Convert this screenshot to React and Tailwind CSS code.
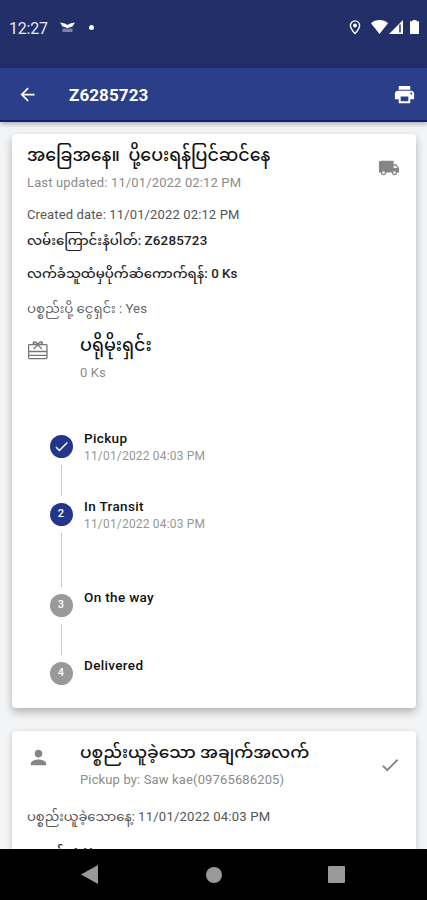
import { MdArrowBack, MdCheck, MdLocalShipping, MdPerson, MdPrint } from "react-icons/md";

const steps = [
  { id: 1, title: "Pickup", date: "11/01/2022 04:03 PM", active: true, done: true, line: "h-[31px]" },
  { id: 2, title: "In Transit", date: "11/01/2022 04:03 PM", active: true, line: "h-[54px]" },
  { id: 3, title: "On the way", line: "h-[31px]" },
  { id: 4, title: "Delivered" },
];

const StatusBar = () => {
  return (
    <div className="h-[68px] bg-[#222f69] text-[#e6e8f2] flex items-start pt-4 pl-[9px] pr-[8px]">
      <span className="text-base leading-6 tracking-[-0.2px] w-[51px] mt-px whitespace-nowrap">12:27</span>
      <svg className="w-[15px] h-[11px] mt-[6px]" viewBox="0 0 15 11">
        <path d="M0 .5 5 1.500 7.500 3 10 1.500 15 .5 12.500 4.500 9 5.500 7.500 6.500 6 5.500 2.500 4.500Z" fill="#fff" />
        <path d="M2.500 6.500h3L7.500 7.500 9.500 6.500h3v3.500h-10z" fill="#7d84a6" />
      </svg>
      <span className="w-[5px] h-[5px] rounded-full bg-white ml-[14px] mt-[9px]"></span>
      <svg className="w-[12px] h-[15px] ml-auto mt-[4px]" viewBox="0 0 12 15">
        <path
          d="M6 .9a4.600 4.600 0 0 0-4.600 4.600C1.400 8.700 6 13.600 6 13.600s4.600-4.900 4.600-8.100A4.600 4.600 0 0 0 6 .9Z"
          fill="none"
          stroke="#fff"
          strokeWidth="1.400"
        />
        <circle cx="6" cy="5.500" r="1.900" fill="#fff" />
      </svg>
      <svg className="w-[17px] h-[14px] ml-[10px] mt-[4px]" viewBox="0 0 17 14">
        <path d="M0 3.200C4.500-1 12.500-1 17 3.200L8.500 14Z" fill="#fff" />
      </svg>
      <svg className="w-[14px] h-[14px] ml-px mt-[4px]" viewBox="0 0 14 14">
        <path d="M14 0v14H0Z" fill="#fff" />
        <path d="M11 4.500v8" stroke="#222f69" strokeWidth="1.500" />
      </svg>
      <svg className="w-[9px] h-[14px] ml-[7px] mt-[4px]" viewBox="0 0 9 14">
        <path d="M2.500 0h4v1.300H9V14H0V1.300h2.500Z" fill="#fff" />
      </svg>
    </div>
  );
};

const Header = () => {
  return (
    <div className="relative h-[54px] bg-[#2b3e8a] border-b-2 border-[#0f2478] text-white flex items-center pl-[17px] pr-[12px] shadow-[0_2px_5px_rgba(0,0,0,0.3)]">
      <MdArrowBack className="w-[21px] h-[21px] mt-px" />
      <h1 className="ml-[31px] mt-[3px] text-[17px] font-bold tracking-[0.1px]">Z6285723</h1>
      <MdPrint className="w-[23px] h-[23px] ml-auto -mr-px mt-px" />
    </div>
  );
};

const GiftIcon = () => {
  return (
    <svg
      className="w-[22px] h-[22px] text-[#777] mt-[7px]"
      viewBox="0 0 22 22"
      fill="none"
      stroke="currentColor"
      strokeWidth="1.3"
    >
      <rect x="1.6" y="5.600" width="18.400" height="14" rx="0.8" />
      <path d="M1.600 12.500H20M1.600 16.300H20" />
      <path d="M10.800 5.600C9.500 3 7.500 2.200 6.500 3.200S7 5.600 10.800 5.600C14.600 5.600 16.100 4.200 15.100 3.200S12.100 3 10.800 5.600ZM10.800 5.600 6.800 10M10.800 5.600l4 4.400" />
    </svg>
  );
};

const Step = ({ step }) => {
  return (
    <div className="flex">
      <div className="w-[22px] flex flex-col items-center">
        <div
          className={`w-[23px] h-[23px] rounded-full text-white text-[11px] font-medium flex items-center justify-center ${
            step.active ? "bg-[#23368b]" : "bg-[#999999]"
          }`}
        >
          {step.done ? <MdCheck className="w-[17px] h-[17px]" /> : step.id}
        </div>
        {step.line && <div className={`w-px bg-[#c9c9c9] my-[7px] ${step.line}`}></div>}
      </div>
      <div className="ml-3 -mt-[6px]">
        <p className="text-[13.5px] leading-[18px] font-medium text-[#111] tracking-[0.35px]">{step.title}</p>
        {step.date && (
          <p className="text-xs leading-[19px] text-[#969696] tracking-[0.18px]">{step.date}</p>
        )}
      </div>
    </div>
  );
};

const App = () => {
  return (
    <div className="h-[900px] w-full overflow-hidden flex flex-col bg-[#f2f4f6] font-[Roboto,'Noto_Sans_Myanmar',Padauk,sans-serif] whitespace-nowrap">
      <StatusBar />
      <Header />

      <div className="flex-1 min-h-0 overflow-hidden pl-3 pr-[11px] pt-[12px]">
        {/* Status card */}
        <div className="h-[574px] bg-white rounded-[4px] px-[15px] pt-[10px] shadow-[0_4px_8px_rgba(0,0,0,0.28)]">
          <div className="flex justify-between">
            <div>
              <h2 className="h-[23px] text-[17.4px] leading-[23px] font-medium text-[#111]">
                အခြေအနေ။&nbsp; ပို့ပေးရန်ပြင်ဆင်နေ
              </h2>
              <p className="h-[30px] text-[13px] leading-[31px] text-[#8b8b8b] tracking-[0.14px]">
                Last updated: 11/01/2022 02:12 PM
              </p>
            </div>
            <MdLocalShipping className="w-[22px] h-[22px] text-[#858585] mt-[13px] mr-px" />
          </div>
          <p className="h-[35px] text-[13px] leading-[35px] text-[#555] tracking-[0.14px]">
            Created date: 11/01/2022 02:12 PM
          </p>
          <p className="h-[17px] text-[13.4px] leading-[17px] font-medium text-[#222]">
            လမ်းကြောင်းနံပါတ်: <span className="tracking-[0.2px]">Z6285723</span>
          </p>
          <p className="h-[50px] text-[13.3px] leading-[50px] font-medium text-[#222]">
            လက်ခံသူထံမှပိုက်ဆံကောက်ရန်: 0 Ks
          </p>
          <p className="h-[20px] text-[13.3px] leading-[20px] text-[#666]">ပစ္စည်းပို့ ငွေရှင်း : Yes</p>

          <div className="flex mt-[13px]">
            <GiftIcon />
            <div className="ml-[31px]">
              <h2 className="h-[26px] text-[17.5px] leading-[26px] font-medium text-[#111]">ပရိုမိုးရှင်း</h2>
              <p className="h-[28px] text-[13px] leading-[30px] text-[#8b8b8b] tracking-[0.14px]">0 Ks</p>
            </div>
          </div>

          <div className="ml-[23px] mt-[49px]">
            {steps.map((step) => (
              <Step key={step.id} step={step} />
            ))}
          </div>
        </div>

        {/* Pickup card */}
        <div className="mt-[23px] h-[200px] bg-white rounded-[4px] px-[15px] pt-[8px] shadow-[0_2px_6px_rgba(0,0,0,0.2)]">
          <div className="flex">
            <MdPerson className="w-[23px] h-[23px] text-[#858585] mt-[7px]" />
            <div className="ml-[30px]">
              <h2 className="h-[26px] text-[17px] leading-[26px] font-medium text-[#111]">
                ပစ္စည်းယူခဲ့သော အချက်အလက်
              </h2>
              <p className="h-[29px] text-[13px] leading-[29px] text-[#8b8b8b] tracking-[0.14px]">
                Pickup by: Saw kae(09765686205)
              </p>
            </div>
            <MdCheck className="w-[22px] h-[22px] text-[#858585] ml-auto mt-[15px]" />
          </div>
          <p className="mt-[13px] h-[20px] text-[13.1px] leading-[20px] text-[#555]">
            ပစ္စည်းယူခဲ့သောနေ့: <span className="tracking-[0.2px]">11/01/2022 04:03 PM</span>
          </p>
          <p className="mt-[16px] h-[20px] text-[13.2px] leading-[20px] font-medium text-[#222]">အမည်: A Nwe</p>
        </div>
      </div>

      {/* Android navigation */}
      <div className="h-[51px] shrink-0 bg-black flex items-center pl-[81px] pr-[82px] justify-between text-[#999]">
        <svg className="w-[17px] h-[19px]" viewBox="0 0 17 19">
          <path d="M17 0v19L0 9.500Z" fill="currentColor" />
        </svg>
        <span className="w-[16px] h-[16px] rounded-full bg-[#999] ml-px"></span>
        <span className="w-[17px] h-[17px] rounded-[1px] bg-[#999]"></span>
      </div>
    </div>
  );
};

export default App;
